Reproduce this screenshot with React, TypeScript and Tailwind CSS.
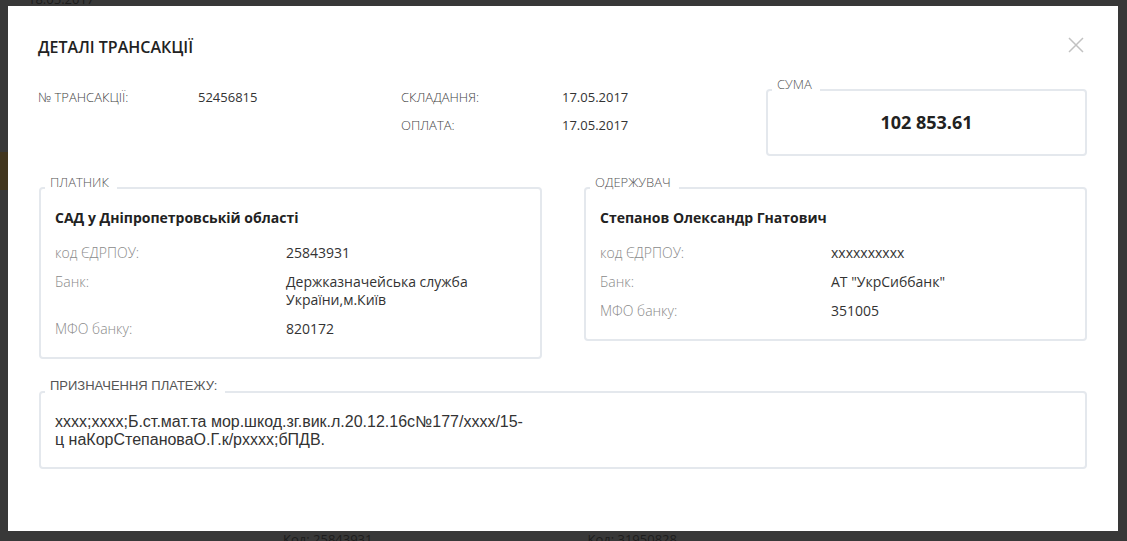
import React from "react";

type Row = { label: string; value: React.ReactNode };

interface PartyBoxProps {
  title: string;
  name: string;
  rows: Row[];
}

function Legend({ children, arial }: { children: React.ReactNode; arial?: boolean }) {
  return (
    <span
      className={`absolute left-[4px] top-[-15px] bg-white pl-[5px] pr-[8px] text-[13px] leading-[16px] text-[#555] ${
        arial ? "font-['Liberation_Sans',Arial,sans-serif] font-normal" : "font-light"
      }`}
    >
      {children}
    </span>
  );
}

function PartyBox({ title, name, rows }: PartyBoxProps) {
  return (
    <div className="relative rounded-[4px] border-2 border-[#e4e8ed] pl-[14px] pr-[10px] pt-[19px] pb-[19px]">
      <Legend>{title}</Legend>
      <div className="text-[14px] font-bold leading-[20px] text-[#222]">{name}</div>
      <div className="mt-[16px] flex flex-col gap-[11px]">
        {rows.map((r) => (
          <div key={r.label} className="grid grid-cols-[231px_1fr] text-[14px] leading-[18px]">
            <span className="font-light text-[#8a8a8a]">{r.label}</span>
            <span className="text-[#333]">{r.value}</span>
          </div>
        ))}
      </div>
    </div>
  );
}

export default function App() {
  return (
    <div className="relative flex h-[541px] flex-col overflow-hidden bg-[#383838] font-['Open_Sans','Noto_Sans',sans-serif] text-[13px] text-[#1c1c1c]">
      {/* dimmed page behind the dialog */}
      <div className="-mt-[9px] pl-[28px] leading-[16px]">18.05.2017</div>
      <div className="mt-[145px] h-[38px] w-[8px] bg-[#42361f]" />
      <div className="mt-auto flex h-[10px] gap-[215px] pl-[283px] leading-[16px]">
        <span>Код: 25843931</span>
        <span>Код: 31950828</span>
      </div>

      {/* dialog */}
      <div className="absolute left-[8px] top-[6px] h-[525px] w-[1110px] bg-white pl-[30px] pr-[31px] pt-[31px]">
        <button className="absolute right-[34px] top-[31px] text-[#c2c2c2]">
          <svg width="16" height="16" viewBox="0 0 16 16" fill="none" stroke="currentColor" strokeWidth="1.5">
            <path d="M1 1L15 15M15 1L1 15" />
          </svg>
        </button>

        <h2 className="text-[16px] font-semibold leading-[20px] text-[#222]">ДЕТАЛІ ТРАНСАКЦІЇ</h2>

        {/* Header info */}
        <div className="mt-[26px] flex items-start">
          <div className="flex flex-col text-[13px] leading-[28px]">
            <div className="flex">
              <span className="w-[160px] font-light text-[#444]">№ ТРАНСАКЦІЇ:</span>
              <span className="w-[203px] text-[#333]">52456815</span>
            </div>
          </div>
          <div className="flex flex-col text-[13px] leading-[28px]">
            <div className="flex">
              <span className="w-[161px] font-light text-[#444]">СКЛАДАННЯ:</span>
              <span className="w-[204px] text-[#333]">17.05.2017</span>
            </div>
            <div className="flex">
              <span className="w-[161px] font-light text-[#444]">ОПЛАТА:</span>
              <span className="w-[204px] text-[#333]">17.05.2017</span>
            </div>
          </div>
          <div className="relative mt-[6px] flex h-[67px] w-[321px] items-center justify-center rounded-[4px] border-2 border-[#e4e8ed]">
            <Legend>СУМА</Legend>
            <span className="text-[18px] font-bold text-[#222]">102 853.61</span>
          </div>
        </div>

        {/* Parties */}
        <div className="mt-[31px] grid grid-cols-2 items-start gap-[42px] pl-px">
          <PartyBox
            title="ПЛАТНИК"
            name="САД у Дніпропетровській області"
            rows={[
              { label: "код ЄДРПОУ:", value: "25843931" },
              {
                label: "Банк:",
                value: (
                  <>
                    Держказначейська служба
                    <br />
                    України,м.Київ
                  </>
                ),
              },
              { label: "МФО банку:", value: "820172" },
            ]}
          />
          <PartyBox
            title="ОДЕРЖУВАЧ"
            name="Степанов Олександр Гнатович"
            rows={[
              { label: "код ЄДРПОУ:", value: "xxxxxxxxxx" },
              { label: "Банк:", value: 'АТ "УкрСиббанк"' },
              { label: "МФО банку:", value: "351005" },
            ]}
          />
        </div>

        {/* Payment purpose */}
        <div className="relative ml-px mt-[32px] rounded-[4px] border-2 border-[#e4e8ed] pb-[18px] pl-[14px] pt-[20px]">
          <Legend arial>ПРИЗНАЧЕННЯ ПЛАТЕЖУ:</Legend>
          <p className="font-['Liberation_Sans',Arial,sans-serif] text-[16px] leading-[18px] text-[#333]">
            xxxx;xxxx;Б.ст.мат.та мор.шкод.зг.вик.л.20.12.16с№177/xxxx/15-
            <br />
            ц наКорСтепановаО.Г.к/рxxxx;бПДВ.
          </p>
        </div>
      </div>
    </div>
  );
}
